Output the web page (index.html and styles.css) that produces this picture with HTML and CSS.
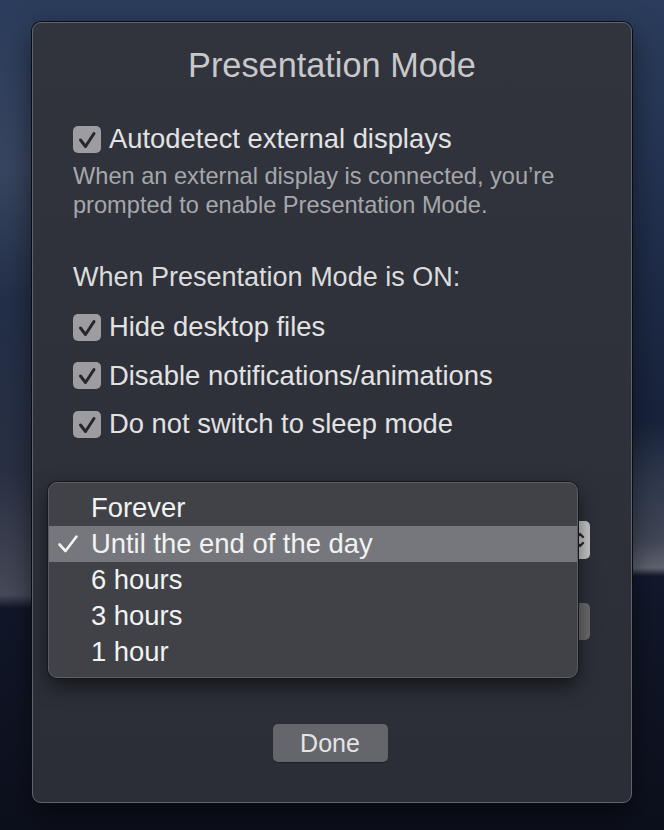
FILE: index.html
```html
<!DOCTYPE html>
<html>
<head>
<meta charset="utf-8">
<link rel="stylesheet" href="styles.css">
</head>
<body>
<div class="window">
  <h1 class="title">Presentation Mode</h1>
  <div class="check-row first">
    <span class="cb"><svg viewBox="0 0 28 27" width="28" height="27"><path d="M7.5 14 L12.5 20.5 L21 7.5" fill="none" stroke="#25272d" stroke-width="3" stroke-linecap="round" stroke-linejoin="round"/></svg></span>
    <span class="label">Autodetect external displays</span>
  </div>
  <p class="desc">When an external display is connected, you’re<br>prompted to enable Presentation Mode.</p>
  <p class="section">When Presentation Mode is ON:</p>
  <div class="checks">
    <div class="check-row">
      <span class="cb"><svg viewBox="0 0 28 27" width="28" height="27"><path d="M7.5 14 L12.5 20.5 L21 7.5" fill="none" stroke="#25272d" stroke-width="3" stroke-linecap="round" stroke-linejoin="round"/></svg></span>
      <span class="label">Hide desktop files</span>
    </div>
    <div class="check-row">
      <span class="cb"><svg viewBox="0 0 28 27" width="28" height="27"><path d="M7.5 14 L12.5 20.5 L21 7.5" fill="none" stroke="#25272d" stroke-width="3" stroke-linecap="round" stroke-linejoin="round"/></svg></span>
      <span class="label">Disable notifications/animations</span>
    </div>
    <div class="check-row">
      <span class="cb"><svg viewBox="0 0 28 27" width="28" height="27"><path d="M7.5 14 L12.5 20.5 L21 7.5" fill="none" stroke="#25272d" stroke-width="3" stroke-linecap="round" stroke-linejoin="round"/></svg></span>
      <span class="label">Do not switch to sleep mode</span>
    </div>
  </div>
  <div class="under">
    <div class="popup-row">
      <span class="popup-btn">
        <svg class="chev" viewBox="0 0 12 24" width="12" height="24"><path d="M3 9 L6 6 L9 9 M3 15 L6 18 L9 15" fill="none" stroke="#2a2c31" stroke-width="2.4" stroke-linecap="round" stroke-linejoin="round"/></svg>
      </span>
    </div>
    <div class="btn-row">
      <span class="key-btn"></span>
    </div>
  </div>
  <div class="footer">
    <button class="done">Done</button>
  </div>

  <div class="menu">
    <div class="item">Forever</div>
    <div class="item selected">
      <svg class="tick" viewBox="0 0 22 20" width="22" height="20"><path d="M2.5 10.5 L8.5 17 L19.5 2.5" fill="none" stroke="#f2f2f2" stroke-width="2.6" stroke-linecap="round" stroke-linejoin="round"/></svg>
      Until the end of the day
    </div>
    <div class="item">6 hours</div>
    <div class="item">3 hours</div>
    <div class="item">1 hour</div>
  </div>
</div>
</body>
</html>
```

FILE: styles.css
```css
html, body {
  margin: 0;
  padding: 0;
}
body {
  width: 664px;
  height: 830px;
  overflow: hidden;
  font-family: "Liberation Sans", Arial, sans-serif;
  background:
    linear-gradient(to bottom, transparent 0, rgba(95,105,125,0.35) 170px, rgba(60,68,88,0.2) 300px, rgba(70,74,88,0.4) 470px, rgba(105,108,118,0.6) 595px, rgba(20,26,44,0) 608px, transparent 830px) 0 0 / 32px 830px no-repeat,
    linear-gradient(to bottom, transparent 0, transparent 420px, rgba(70,80,100,0.45) 470px, rgba(95,100,112,0.6) 540px, rgba(120,124,132,0.75) 568px, transparent 576px, transparent 830px) 632px 0 / 32px 830px no-repeat,
    linear-gradient(to bottom, #2b3d5c 0, #263655 120px, #1d2a45 300px, #161f36 480px, #111729 620px, #0c101c 830px);
}
.window {
  position: relative;
  box-sizing: border-box;
  margin: 22px 0 0 32px;
  width: 600px;
  height: 781px;
  border: 1px solid #62646a;
  border-radius: 9px;
  background: linear-gradient(to bottom, #31343d, #2b2e37);
  box-shadow: 0 0 0 1px #0a0c13, 0 12px 30px rgba(0,0,0,0.5);
  padding: 22px 0 0 40px;
}
.title {
  margin: 0 0 0 -40px;
  text-align: center;
  font-size: 34.3px;
  line-height: 40px;
  font-weight: normal;
  color: #c8c8ca;
}
.check-row {
  display: flex;
  align-items: center;
  height: 28px;
  gap: 8px;
}
.check-row.first {
  margin-top: 40px;
}
.cb {
  display: block;
  width: 28px;
  height: 27px;
  border-radius: 5px;
  background: #9c9ca1;
  flex: none;
}
.cb svg {
  display: block;
}
.label {
  font-size: 27.4px;
  line-height: 28px;
  color: #e2e2e2;
}
.desc {
  margin: 9px 0 0 0;
  font-size: 23.6px;
  line-height: 29px;
  color: #a6a7ab;
}
.section {
  margin: 41px 0 0 0;
  font-size: 27px;
  line-height: 32px;
  color: #dcdcdc;
}
.checks {
  margin-top: 20px;
  display: flex;
  flex-direction: column;
  gap: 20.5px;
}
.under {
  margin-top: 83px;
}
.popup-row {
  display: flex;
  justify-content: flex-end;
  align-items: center;
  height: 38px;
  padding-right: 41px;
}
.popup-btn {
  display: flex;
  align-items: center;
  justify-content: flex-end;
  box-sizing: border-box;
  width: 280px;
  height: 38px;
  padding: 0 4px 0 12px;
  border-radius: 5px;
  background: #c5c5c9;
}
.chev {
  display: block;
}
.btn-row {
  display: flex;
  justify-content: flex-end;
  margin-top: 44px;
  padding-right: 41px;
}
.key-btn {
  display: block;
  width: 180px;
  height: 37px;
  border-radius: 5px;
  background: #69696e;
}
.footer {
  position: absolute;
  left: 0;
  right: 0;
  bottom: 40px;
  display: flex;
  justify-content: center;
}
.done {
  width: 115px;
  height: 38px;
  margin-left: -4px;
  border: none;
  border-radius: 5px;
  background: #65666b;
  font-family: "Liberation Sans", Arial, sans-serif;
  font-size: 25px;
  color: #e4e4e4;
  padding: 0;
  box-shadow: 0 1px 0 rgba(0,0,0,0.3);
}
.menu {
  position: absolute;
  left: 15px;
  top: 459px;
  box-sizing: border-box;
  width: 530px;
  height: 196px;
  padding: 7px 0;
  border: 1px solid #5c5e64;
  border-radius: 9px;
  background: #404247;
  box-shadow: 0 0 0 1px #16181e, 0 8px 20px rgba(0,0,0,0.55);
}
.item {
  position: relative;
  height: 36px;
  padding-left: 42px;
  font-size: 27.4px;
  line-height: 36px;
  color: #f2f2f2;
}
.item.selected {
  background: #76777c;
}
.tick {
  position: absolute;
  left: 8px;
  top: 8px;
}
```
